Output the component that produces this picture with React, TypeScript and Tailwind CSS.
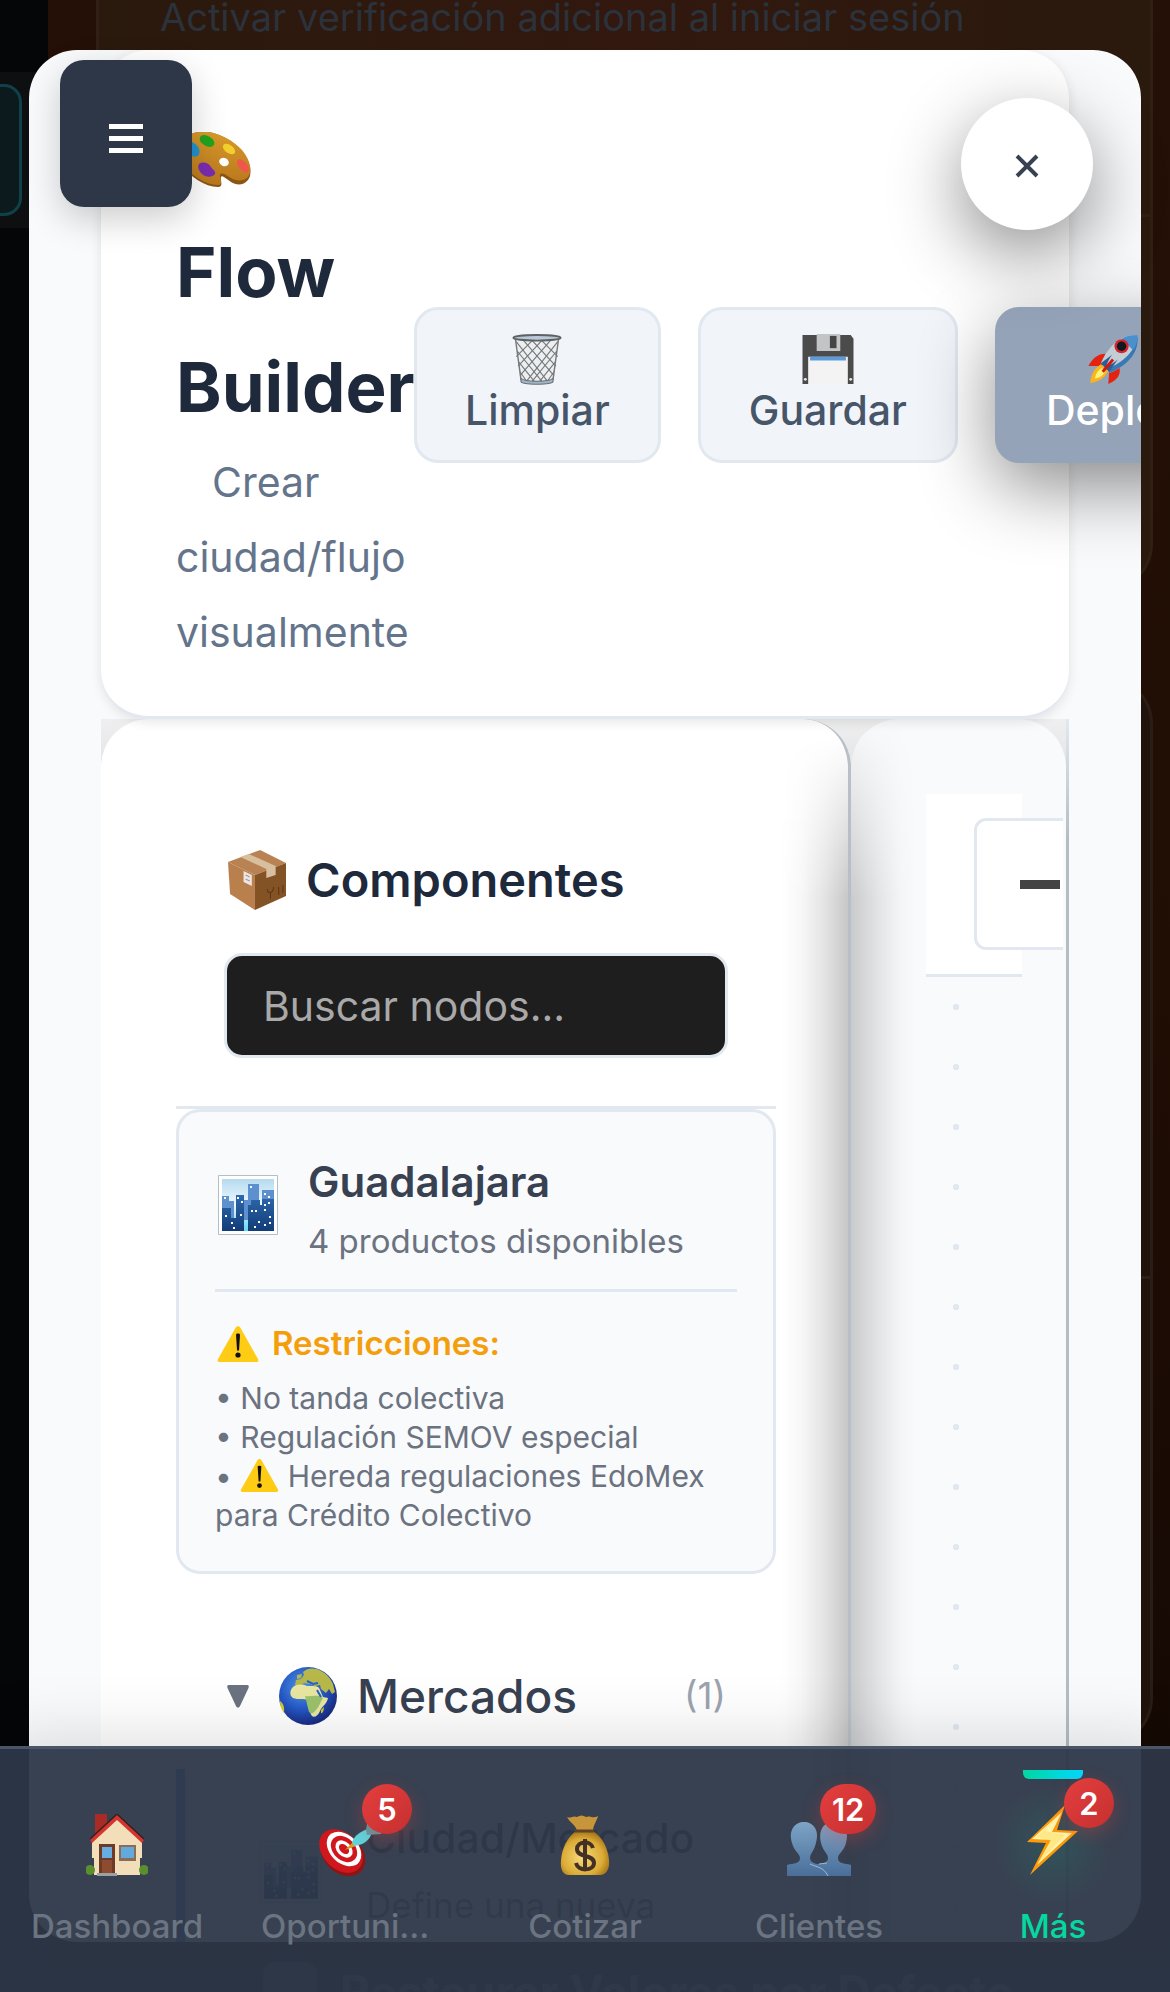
import type { ReactNode } from "react";

type IconProps = { className?: string };

function Palette({ className }: IconProps) {
  return (
    <svg viewBox="0 0 76 56" className={className} aria-hidden="true">
      <defs>
        <linearGradient id="pal" x1="0" y1="0" x2="0" y2="1">
          <stop offset="0" stopColor="#d99a2b" />
          <stop offset="1" stopColor="#b9771d" />
        </linearGradient>
      </defs>
      <path d="M22 0C38-2 56 7 66 19c8 10 11 23 6 29-5 6-12 5-17 2-6-4-9-7-10-5-1 3 3 10-3 10-13 0-28-10-38-24C-2 18 6 2 22 0z" fill="#8a5512" />
      <path d="M22 0C38-2 56 7 66 18c8 10 11 21 6 27-5 5-12 4-17 1-6-4-10-6-11-3-1 3 4 10-2 10-13 0-28-10-38-24C-2 16 6 2 22 0z" fill="url(#pal)" />
      <ellipse cx="48" cy="30" rx="5" ry="4" fill="#fff" transform="rotate(25 48 30)" />
      <ellipse cx="31" cy="9" rx="8" ry="5" fill="#22a51c" transform="rotate(30 31 9)" />
      <ellipse cx="53" cy="17" rx="7" ry="4" fill="#f3cf2e" transform="rotate(35 53 17)" />
      <ellipse cx="67" cy="34" rx="8" ry="4" fill="#f0564b" transform="rotate(50 67 34)" />
      <ellipse cx="16" cy="17" rx="9" ry="6" fill="#2193d0" transform="rotate(45 16 17)" />
      <path d="M23 32c4-3 10-1 12 3 2 3 5 4 4 7-3 4-10 3-13 0s-5-7-3-10z" fill="#7a2db0" />
    </svg>
  );
}

function Trash({ className }: IconProps) {
  return (
    <svg viewBox="0 0 54 54" className={className} aria-hidden="true">
      <path d="M4 4l6 44c0 4 34 4 34 0l6-44z" fill="#eceff1" stroke="#77797a" strokeWidth="1.5" />
      <g stroke="#77797a" strokeWidth="1.2" fill="none">
        <path d="M5 8l33 42M12 6l33 38M21 6l26 28M31 6l18 18M6 18l26 32M8 30l16 20M9 40l7 10" />
        <path d="M49 8L16 50M42 6L9 44M33 6L7 34M23 6L5 24M48 18L22 50M46 30L30 50M45 40l-7 10" />
      </g>
      <ellipse cx="27" cy="4" rx="25" ry="3" fill="#b9c9d8" stroke="#5f6264" strokeWidth="2" />
      <path d="M10 47c4 4 30 4 34 0v4c-4 3-30 3-34 0z" fill="#9fb4c6" stroke="#66696b" />
    </svg>
  );
}

function Floppy({ className }: IconProps) {
  return (
    <svg viewBox="0 0 54 54" className={className} aria-hidden="true">
      <path d="M0 1h51l3 4v48H0z" fill="#4b4b4b" />
      <path d="M15 0h25v18H15z" fill="#c3c4c5" />
      <path d="M29 2h7v13h-7z" fill="#454545" />
      <path d="M6 24h42v29H6z" fill="#f3f3f4" />
      <path d="M8 24h38v4H8z" fill="#5a9bdc" />
      <circle cx="3" cy="48" r="1.5" fill="#eee" />
      <circle cx="51" cy="48" r="1.5" fill="#eee" />
    </svg>
  );
}

function Rocket({ className }: IconProps) {
  return (
    <svg viewBox="0 0 54 54" className={className} aria-hidden="true">
      <path d="M18 21C10 21 4 26 0 34l14 0zM33 36c1 8-3 13-12 17l1-15z" fill="#e3230f" />
      <path d="M13 32C5 37 2 45 2 52c8-1 15-5 19-13z" fill="#f9b51b" />
      <path d="M14 36c-5 3-7 8-7 11 4 0 9-3 11-8z" fill="#fff27a" />
      <path d="M52 1c2 17-8 31-29 40L13 31C21 12 35 0 52 1z" fill="#c3cdd6" />
      <path d="M52 1c2 17-8 31-29 40l-4-4C38 30 50 17 52 1z" fill="#3a78b4" />
      <path d="M52 1c-7 0-12 1-17 4l12 12c4-5 5-11 5-16z" fill="#4a90cc" />
      <circle cx="35" cy="13" r="7.5" fill="#d8232a" />
      <circle cx="35" cy="13" r="5" fill="#101820" />
      <path d="M13 31l9 9 9-13c-3 3-8 6-12 7 1-4 3-8 6-12z" fill="#2b5f92" />
      <path d="M15 40l11-13" stroke="#d8150c" strokeWidth="3" />
    </svg>
  );
}

function Package({ className }: IconProps) {
  return (
    <svg viewBox="0 0 56 60" preserveAspectRatio="none" className={className} aria-hidden="true">
      <path d="M0 12L31 0l25 13-30 12z" fill="#b98252" />
      <path d="M0 12l26 13v35L2 44z" fill="#b97f4d" />
      <path d="M26 25l30-12v33L26 60z" fill="#835225" />
      <path d="M12 7l8-3 26 12v9l-9 3v-9z" fill="#d8bfa0" />
      <path d="M15 21l8 4v11l-8-4z" fill="#eee7df" />
      <path d="M17 25l4 2M17 29l4 2" stroke="#99a" />
      <path d="M38 39c0 6 6 4 6-2M41 43v6M49 37v8M53 35v8" stroke="#5c3714" strokeWidth="1" fill="none" />
    </svg>
  );
}

function City({ className }: IconProps) {
  return (
    <svg viewBox="0 0 60 60" className={className} aria-hidden="true">
      <defs>
        <linearGradient id="sky" x1="0" y1="0" x2="0" y2="1">
          <stop offset="0" stopColor="#b5daf0" />
          <stop offset="0.5" stopColor="#eef9fe" />
          <stop offset="1" stopColor="#5fd8f3" />
        </linearGradient>
        <linearGradient id="bld" x1="0" y1="0" x2="0" y2="1">
          <stop offset="0" stopColor="#2e69ae" />
          <stop offset="1" stopColor="#123c78" />
        </linearGradient>
      </defs>
      <path d="M.5.5h59v59H.5z" fill="#fff" stroke="#b4bfc4" />
      <path d="M4 4h52v52H4z" fill="url(#sky)" />
      <path d="M4 21h7v5h5v18h-12zM30 9h11v25h-11zM44 15h12v20H44zM24 25h6v20h-6z" fill="#5d90cf" />
      <path d="M4 33h9v10h5V20h8v36H4zM30 30h3v-5h9v5h2v-6h12v32H30z" fill="url(#bld)" />
      <g fill="#fff">
        <path d="M6 22h2v2H6zM19 22h2v2h-2zM23 26h2v2h-2zM32 11h2v2h-2zM46 18h2v2h-2zM50 21h2v2h-2zM7 40h2v2H7zM13 47h2v2h-2zM15 52h2v2h-2zM22 39h2v2h-2zM33 35h2v2h-2zM37 35h2v2h-2zM46 29h2v2h-2zM50 27h2v2h-2zM46 34h2v2h-2zM51 41h2v2h-2zM40 46h2v2h-2zM36 51h2v2h-2zM46 49h2v2h-2zM51 47h2v2h-2z" />
      </g>
    </svg>
  );
}

function Warning({ className }: IconProps) {
  return (
    <svg viewBox="0 0 42 36" className={className} aria-hidden="true">
      <path d="M18.5 2c1-2.500 4-2.500 5 0L41 33c1 2 0 3-2 3H3c-2 0-3-1-2-3z" fill="#ffcc15" />
      <path d="M19 8.500c0-1.500 4-1.500 4 0l-1 16h-2z" fill="#111" />
      <circle cx="21" cy="29" r="2.6" fill="#111" />
    </svg>
  );
}

function Globe({ className }: IconProps) {
  return (
    <svg viewBox="0 0 58 58" className={className} aria-hidden="true">
      <defs>
        <radialGradient id="sea" cx="0.4" cy="0.35" r="0.65">
          <stop offset="0" stopColor="#4f98e8" />
          <stop offset="0.6" stopColor="#2456c4" />
          <stop offset="1" stopColor="#1a2c82" />
        </radialGradient>
      </defs>
      <circle cx="29" cy="29" r="29" fill="url(#sea)" />
      <path d="M18 8l5-1-1 4-4 1zM24 5c4-4 9-4 14-3 8 3 13 8 16 15l2 8-3 2-3-5-3 4-5-4-1-4-5 1-5-2-6-1-3 2-6 0 1-5 5-1 3-4z" fill="#b8b84a" />
      <path d="M14 20c4-3 9-3 14-1 6 0 12-1 13 4l3 7 5 1c-1 6-6 8-8 13-2 5-6 7-8 5-3-4-2-10-4-16-4-2-10 0-15-2-4-3-3-8 0-11z" fill="#e8e6a0" />
      <path d="M26 29c6 1 13-2 18 2-3 5-4 9-7 12-3 4-5 4-7 2-2-6-2-10-4-16z" fill="#9cc26c" />
      <path d="M1 34c3 2 5 6 4 12-3-4-4-8-4-12zM42 43l3-3c0 4-2 7-3 6z" fill="#cfc92f" />
      <path d="M28 14l6 3 5-1M38 23l4 7" stroke="#2a5fc8" strokeWidth="2" fill="none" />
    </svg>
  );
}

function House({ className }: IconProps) {
  return (
    <svg viewBox="0 0 62 62" className={className} aria-hidden="true">
      <path d="M9 0h12v22H9z" fill="#a92b25" />
      <path d="M31 5L6 27v17h2v17h46V44h2V27z" fill="#f2dfba" />
      <path d="M31 1L4 26l2 3L31 6l25 23 2-3z" fill="#d8342f" />
      <path d="M31 0L4 25M31 0l27 25" stroke="#39221c" strokeWidth="1.5" />
      <path d="M13 30h16v29H13z" fill="#6e3926" />
      <path d="M16 33h10v11H16z" fill="#66aee2" />
      <path d="M16 46h10v13H16z" fill="#8d4b31" />
      <path d="M33 31h17v16H33z" fill="#8a6d58" />
      <path d="M35 33h13v11H35z" fill="#62a9de" />
      <path d="M11 59h20v3H11z" fill="#9ba0a3" />
      <circle cx="4" cy="56" r="5" fill="#5a8f2e" />
      <circle cx="58" cy="56" r="5" fill="#5a8f2e" />
    </svg>
  );
}

function Dart({ className }: IconProps) {
  return (
    <svg viewBox="0 0 66 58" className={className} aria-hidden="true">
      <ellipse cx="25" cy="36" rx="19" ry="25" transform="rotate(-45 25 36)" fill="#8f1414" />
      <ellipse cx="23" cy="33" rx="18" ry="25" transform="rotate(-45 23 33)" fill="#cf171d" />
      <ellipse cx="26" cy="31" rx="14" ry="20" transform="rotate(-45 26 31)" fill="#fff" />
      <ellipse cx="26" cy="31" rx="11" ry="15" transform="rotate(-45 26 31)" fill="#cf171d" />
      <ellipse cx="26" cy="31" rx="7" ry="10" transform="rotate(-45 26 31)" fill="#fff" />
      <ellipse cx="26" cy="31" rx="4" ry="6" transform="rotate(-45 26 31)" fill="#cf171d" />
      <path d="M27 32l8-8 3 4z" fill="#d79b1d" />
      <path d="M34 24c3-7 9-11 16-13l3 6c-3 7-9 10-17 11z" fill="#5ed4dc" />
      <path d="M48 12l2-12 16 12-3 4-14 1z" fill="#5b9ca5" />
    </svg>
  );
}

function MoneyBag({ className }: IconProps) {
  return (
    <svg viewBox="0 0 50 60" className={className} aria-hidden="true">
      <defs>
        <radialGradient id="bag" cx="0.45" cy="0.6" r="0.6">
          <stop offset="0" stopColor="#f7dc7d" />
          <stop offset="0.7" stopColor="#dbab35" />
          <stop offset="1" stopColor="#a77417" />
        </radialGradient>
      </defs>
      <path d="M7 2c4 2 6-2 10 0 3-2 6-2 9 0 4-2 7 2 12-1-1 5-5 9-5 15H17C16 10 10 8 7 2z" fill="#c8963a" />
      <path d="M16 16h17c10 7 15 17 16 29 1 9-3 15-9 15H9C3 60 0 54 1 45c1-12 6-22 15-29z" fill="url(#bag)" />
      <path d="M15 16h19" stroke="#5f432a" strokeWidth="3" />
      <path d="M33 33c-2-8-16-7-16 1 0 9 17 5 17 14 0 8-16 9-18 0M25 24v32" stroke="#433126" strokeWidth="4" fill="none" />
    </svg>
  );
}

function People({ className }: IconProps) {
  return (
    <svg viewBox="0 0 64 54" className={className} aria-hidden="true">
      <defs>
        <linearGradient id="ppl" x1="0" y1="0" x2="0" y2="1">
          <stop offset="0" stopColor="#7da5c7" />
          <stop offset="1" stopColor="#4a6e99" />
        </linearGradient>
      </defs>
      <path
        d="M0 54V43c7-2 13-1 13-7 0-4-6-7-8-15C1 8 8 0 17 0s16 8 12 21c-2 8-6 11-6 15s5 6 9 6 9-2 9-6-5-7-7-15C31 8 37 0 46 0s17 8 13 21c-2 8-8 11-8 15 0 6 6 5 13 7v11z"
        fill="url(#ppl)"
      />
      <path d="M23 42c6 3 14 3 18 12M32 42l8-1" stroke="#9bd" strokeWidth="1" fill="none" />
    </svg>
  );
}

function Bolt({ className }: IconProps) {
  return (
    <svg viewBox="0 0 52 70" className={className} aria-hidden="true">
      <path d="M38 0L0 37l19 1L3 70l48-44-21-1z" fill="#ff9a0a" />
      <path d="M35 7L5 34l19 1-14 25 35-32-20-1z" fill="#fff5b0" />
      <path d="M34 7L18 26l20 4-28 29 14-23-14-4z" fill="#ffd84a" opacity=".4" />
    </svg>
  );
}

function ToolButton({ icon, label, primary }: { icon: ReactNode; label: string; primary?: boolean }) {
  return (
    <button
      type="button"
      className={
        primary
          ? "flex shrink-0 flex-col items-center rounded-3xl bg-[#94a3b8] px-[51px] py-[27px] text-[41px] leading-[51px] font-medium text-white shadow-[0_24px_72px_rgba(0,0,0,0.45)]"
          : "flex shrink-0 flex-col items-center rounded-3xl border-3 border-[#e2e8f0] bg-[#f1f4f9] px-12 py-6 text-[41px] leading-[51px] font-medium text-[#475569]"
      }
    >
      {icon}
      {label}
    </button>
  );
}

function Badge({ children }: { children: ReactNode }) {
  return (
    <span className="flex h-[50px] min-w-[50px] items-center justify-center rounded-full bg-gradient-to-br from-[#e53e3e] to-[#c53030] px-3 text-[31px] leading-[31px] font-semibold text-white shadow-[0_6px_18px_rgba(229,62,62,0.3)]">
      {children}
    </span>
  );
}

function NavItem({ icon, label, badge, active }: { icon: ReactNode; label: string; badge?: string; active?: boolean }) {
  return (
    <li className="min-w-0 flex-1">
      <a href="#" aria-current={active ? "page" : undefined} className="relative flex flex-col items-center pt-[51px]">
        {active && (
          <>
            <span className="absolute top-[21px] left-1/2 h-[9px] w-[60px] -translate-x-1/2 rounded-b-md bg-gradient-to-r from-[#06d6a0] to-[#00d9ff]" />
            <span className="absolute top-9 left-1/2 size-[120px] -translate-x-1/2 rounded-full bg-[radial-gradient(circle,rgba(6,214,160,0.12),transparent_70%)]" />
          </>
        )}
        <span className="relative flex h-[76px] items-end">{icon}</span>
        {badge && (
          <span className={active ? "absolute top-[29px] left-1/2 ml-[11px]" : "absolute top-[35px] left-1/2 ml-[1px] min-w-[60px]"}>
            <span className={active || badge === "12" ? "flex" : "flex pl-[10px]"}>
              <Badge>{badge}</Badge>
            </span>
          </span>
        )}
        <span
          className={
            active
              ? "mt-[29px] text-[33px] leading-[42px] font-medium text-[#06d6a0]"
              : label.endsWith("...")
                ? "mt-[29px] w-[180px] text-[33px] leading-[42px] font-medium text-[#6b7480]"
                : "mt-[29px] text-[33px] leading-[42px] font-medium text-[#6b7480]"
          }
        >
          {label}
        </span>
      </a>
    </li>
  );
}

function SettingsPage() {
  return (
    <div aria-hidden="true" className="flex h-full bg-[#050607]">
      <aside className="w-12 shrink-0 pt-[72px]">
        <div className="bg-[#0d0f11] py-3">
          <div className="h-[132px] w-[22px] rounded-r-[18px] border-3 border-l-0 border-[#0e4148] bg-[#0c1a1e]" />
        </div>
      </aside>
      <main className="flex min-w-0 flex-1 flex-col gap-[84px] bg-gradient-to-b from-[#241006] via-[#200d04] to-[#120804] pr-[17px] pl-12">
        <section className="h-[592px] shrink-0 rounded-b-[48px] border-3 border-t-0 border-[#311e14] bg-gradient-to-r from-[#2a190d] via-[#32180e] to-[#2a190d]">
          <p className="h-[217px] border-b-3 border-[#311e14] pl-[61px] text-[38px] leading-[34px] text-[#2b323b]">
            Activar verificación adicional al iniciar sesión
          </p>
        </section>
        <section className="h-[1070px] shrink-0 rounded-[48px] border-3 border-[#2b1d16] bg-[#20130c]">
          <div className="h-[600px] border-b-3 border-[#2f1e18]" />
        </section>
        <div className="mt-[126px] flex shrink-0 gap-[23px] pl-[167px]">
          <span className="mt-1.5 size-[54px] rounded-xl bg-[#34383e]" />
          <p className="text-[46px] leading-[72px] font-bold text-[#4b5058]">Restaurar Valores por Defecto</p>
        </div>
      </main>
    </div>
  );
}

export default function App() {
  return (
    <div className="relative h-screen overflow-hidden bg-black font-['Inter','Liberation_Sans',sans-serif]">
      <SettingsPage />

      <div
        role="dialog"
        aria-label="Flow Builder"
        className="absolute inset-x-[29px] inset-y-[50px] isolate flex flex-col overflow-hidden rounded-[48px] bg-[#f9fafc] px-[72px]"
      >
        <header className="relative z-10 flex shrink-0 items-center rounded-[48px] border-b-3 border-[#e2e8f0] bg-white pt-[50px] pb-[46px] pl-[75px] shadow-[0_3px_12px_rgba(0,0,0,0.1)]">
          <div className="w-[238px] shrink-0">
            <h1 className="text-[69px] leading-[115px] font-bold text-[#1e293b]">
              <Palette className="inline-block h-14 w-[76px] align-[-6px]" /> Flow Builder
            </h1>
            <p className="indent-9 text-[41px] leading-[75px] text-[#64748b]">Crear ciudad/flujo visualmente</p>
          </div>
          <div className="flex shrink-0 gap-[37px]">
            <ToolButton icon={<Trash className="h-[51px] w-[54px]" />} label="Limpiar" />
            <ToolButton icon={<Floppy className="h-[51px] w-[54px]" />} label="Guardar" />
            <ToolButton primary icon={<Rocket className="h-[51px] w-[54px]" />} label="Deploy" />
          </div>
        </header>

        <div className="flex min-h-0 flex-1 overflow-hidden bg-[linear-gradient(#efeff0,#d9dbdd_90px)]">
          <aside className="relative w-[750px] shrink-0 overflow-hidden rounded-t-[48px] border-r-3 border-[#b8bfc6] bg-white p-[75px] pr-[72px]">
            <div className="border-b-3 border-[#e2e8f0] px-12 py-12">
              <h2 className="mb-9 flex items-center gap-5 pl-1 text-[47px] leading-[75px] font-semibold text-[#1e293b]">
                <Package className="h-[60px] w-[58px] shrink-0" />
                Componentes
              </h2>
              <input
                type="search"
                aria-label="Buscar nodos"
                placeholder="Buscar nodos..."
                className="block h-[105px] w-full rounded-[18px] border-3 border-[#e2e8f0] bg-[#1e1e1e] px-9 text-[41px] text-white placeholder:text-[#a9a9a9]"
              />
            </div>

            <section className="rounded-3xl border-3 border-[#e2e8f0] bg-[#f9fafc] p-9">
              <div className="flex items-start gap-[30px] border-b-3 border-[#e2e8f0] pb-[21px]">
                <City className="mt-[27px] ml-[3px] size-[60px] shrink-0" />
                <div>
                  <h3 className="text-[42px] leading-[67px] font-semibold text-[#374151]">Guadalajara</h3>
                  <p className="text-[33px] leading-[53px] text-[#6b7280]">4 productos disponibles</p>
                </div>
              </div>
              <h4 className="mt-[26px] flex items-center gap-[13px] pl-0.5 text-[33px] leading-[51px] font-semibold text-[#f59e0b]">
                <Warning className="h-9 w-[42px]" />
                Restricciones:
              </h4>
              <ul className="mt-2.5 text-[30px] leading-[39px] text-[#6b7280]">
                <li>• No tanda colectiva</li>
                <li>• Regulación SEMOV especial</li>
                <li>
                  • <Warning className="inline-block h-[33px] w-[39px] align-[-5px]" /> Hereda regulaciones EdoMex para Crédito
                  Colectivo
                </li>
              </ul>
            </section>

            <button type="button" className="mt-[86px] flex w-full items-center px-12 text-left leading-[72px]">
              <svg viewBox="0 0 22 23" className="ml-[3px] h-[23px] w-[22px]" aria-hidden="true">
                <path d="M2 0h18c2 0 2 1 1.500 3L13 21c-1 2-3 2-4 0L.500 3C0 1 0 0 2 0z" fill="#6b7280" />
              </svg>
              <Globe className="ml-[30px] size-[58px]" />
              <span className="ml-5 flex-1 text-[46px] font-medium text-[#374151]">Mercados</span>
              <span className="mr-0.5 text-[37px] text-[#9ca3af]">(1)</span>
            </button>

            <div className="mt-[37px] flex items-center gap-11 border-l-9 border-[#3b82f6] bg-white py-9 pl-[75px]">
              <City className="size-[62px] shrink-0" />
              <div className="text-[#374151]">
                <p className="text-[41px] leading-[67px] font-medium">Ciudad/Mercado</p>
                <p className="text-[35px] leading-[67px] text-[#6b7280]">Define una nueva</p>
              </div>
            </div>
            <div className="pointer-events-none absolute inset-y-0 right-0 w-[66px] bg-[linear-gradient(to_left,rgba(0,0,0,0.22),rgba(0,0,0,0.11)_35%,rgba(0,0,0,0.03)_70%,transparent)] mask-[linear-gradient(transparent_20px,black_180px)]" />
          </aside>

          <section
            aria-label="Lienzo"
            className="relative flex min-w-0 flex-1 flex-col overflow-hidden rounded-t-[48px] border-r-3 border-[#f9fafc] bg-[#f9fafc] pt-[75px] pl-[75px]"
          >
            <div className="w-24 border-b-3 border-[#e2e8f0] bg-white py-6 pl-12">
              <button
                type="button"
                aria-label="Alejar"
                className="flex h-[132px] w-[132px] items-center justify-center rounded-xl border-3 border-[#e2e8f0] bg-white"
              >
                <span className="h-[9px] w-10 bg-[#444]" />
              </button>
            </div>
            <div className="w-[60px] flex-1 bg-[radial-gradient(circle,#e2e8f0_3px,transparent_3px)] bg-size-[60px_60px]" />
            <div className="pointer-events-none absolute inset-y-0 left-0 w-[66px] bg-[linear-gradient(to_right,rgba(0,0,0,0.19),rgba(0,0,0,0.09)_40%,rgba(0,0,0,0.02)_75%,transparent)] mask-[linear-gradient(transparent,black_180px)]" />
          </section>
          <div className="w-[3px] shrink-0 bg-[linear-gradient(#e2e8f0,#b5bdc4_120px)]" />
        </div>
      </div>

      <button
        type="button"
        aria-label="Cerrar"
        className="absolute top-[98px] right-[77px] flex size-[132px] items-center justify-center rounded-full bg-white shadow-[0_24px_72px_rgba(0,0,0,0.45)]"
      >
        <svg viewBox="0 0 24 24" className="mt-1 size-6" fill="none" stroke="#374151" strokeWidth="4" aria-hidden="true">
          <path d="M2 2l20 20M22 2L2 22" />
        </svg>
      </button>
      <button
        type="button"
        aria-label="Menú"
        className="absolute top-[60px] left-[60px] flex h-[147px] w-[132px] flex-col items-center justify-center gap-[7px] rounded-3xl bg-[#2d3748] pt-2.5 shadow-[0_12px_36px_rgba(0,0,0,0.2)]"
      >
        <span className="h-[5px] w-[34px] bg-white" />
        <span className="h-[5px] w-[34px] bg-white" />
        <span className="h-[5px] w-[34px] bg-white" />
      </button>

      <nav className="absolute inset-x-0 bottom-0 h-[246px] border-t-3 border-[#4a5568] bg-[#2d3748]/95 shadow-[0_-12px_60px_rgba(0,0,0,0.12)]">
        <ul className="flex">
          <NavItem icon={<House className="size-[62px]" />} label="Dashboard" />
          <NavItem icon={<Dart className="h-[58px] w-[66px]" />} label="Oportuni..." badge="5" />
          <NavItem icon={<MoneyBag className="h-[62px] w-[50px]" />} label="Cotizar" />
          <NavItem icon={<People className="h-[54px] w-16" />} label="Clientes" badge="12" />
          <NavItem icon={<Bolt className="h-[72px] w-[52px]" />} label="Más" badge="2" active />
        </ul>
      </nav>
    </div>
  );
}
